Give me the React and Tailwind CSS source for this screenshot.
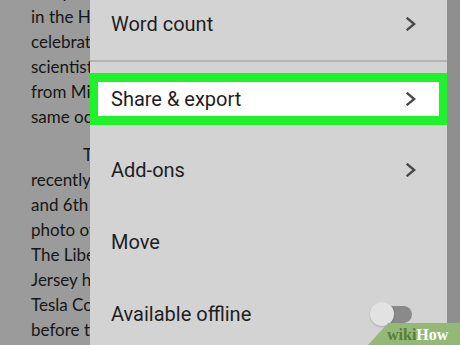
import React from 'react';

const docFont = { fontFamily: 'Lato, "Open Sans", sans-serif' };

function Chevron() {
  return (
    <svg width="10" height="14" viewBox="0 0 10 14" fill="none">
      <path d="M1.5 1.5L8.2 7L1.5 12.5" stroke="#474747" strokeWidth="2.3" strokeLinecap="square" strokeLinejoin="miter" />
    </svg>
  );
}

function Row({ label, chevron, children }) {
  return (
    <div className="h-[72px] shrink-0 flex items-center justify-between pl-[21px] pr-[31px]">
      <span className="text-[20px] text-[#1e1e1e]">{label}</span>
      {chevron && <Chevron />}
      {children}
    </div>
  );
}

const para1 = ['company', 'in the Hall of Fame', 'celebrates the', 'scientist who came', 'from Michigan at the', 'same occasion'];
const para2 = ['recently opened', 'and 6th street', 'photo of the', 'The Liberty', 'Jersey has', 'Tesla Company', 'before the'];

export default function App() {
  return (
    <div className="relative w-[460px] h-[345px] flex overflow-hidden bg-[#9b9b9b]" style={{ fontFamily: 'Roboto, "Liberation Sans", sans-serif' }}>
      <div className="w-[90px] shrink-0 overflow-hidden pl-[31px] text-[#161616] text-[17px] leading-[25px] whitespace-nowrap" style={docFont}>
        <div className="-mt-[21px]">
          {para1.map((l) => (
            <div key={l}>{l}</div>
          ))}
        </div>
        <div className="mt-[13px]">
          <div className="pl-[52px]">The new</div>
          {para2.map((l) => (
            <div key={l}>{l}</div>
          ))}
        </div>
      </div>

      <div className="w-[357px] shrink-0 bg-[#d3d3d3] flex flex-col">
        <div className="-mt-[12px]" />
        <Row label="Word count" chevron />
        <div className="h-[2px] shrink-0 bg-[#b3b3b3]" />
        <div className="h-[72px] shrink-0 pt-[11px]">
          <div className="h-[52px] bg-white border-x-[8px] border-y-[9px] border-[#1ff22b] flex items-center justify-between pl-[13px] pr-[23px]">
            <span className="text-[20px] text-[#1e1e1e]">Share &amp; export</span>
            <Chevron />
          </div>
        </div>
        <Row label="Add-ons" chevron />
        <Row label="Move" />
        <Row label="Available offline">
          <div className="relative w-[42px] h-[24px] mr-[4px] flex items-center">
            <div className="ml-[2px] w-[40px] h-[17px] rounded-full bg-[#8a8a8a]" />
            <div className="absolute left-0 top-0 w-[24px] h-[24px] rounded-full bg-[#e2e2e2] shadow-[0_1px_2px_rgba(0,0,0,0.2)]" />
          </div>
        </Row>
      </div>

      <div className="flex-1 bg-[#8f8f8f]" />

      <div className="absolute right-0 bottom-0 w-[92px] h-[22px] bg-[#94b977] [clip-path:polygon(20px_0,100%_0,100%_100%,0_100%)] pl-[19px] pt-[2px] text-[16px] font-bold leading-[20px] whitespace-nowrap" style={{ fontFamily: '"Liberation Serif", serif' }}>
        <span className="text-[#5b7a3f]">wiki</span>
        <span className="text-white">How</span>
      </div>
    </div>
  );
}
